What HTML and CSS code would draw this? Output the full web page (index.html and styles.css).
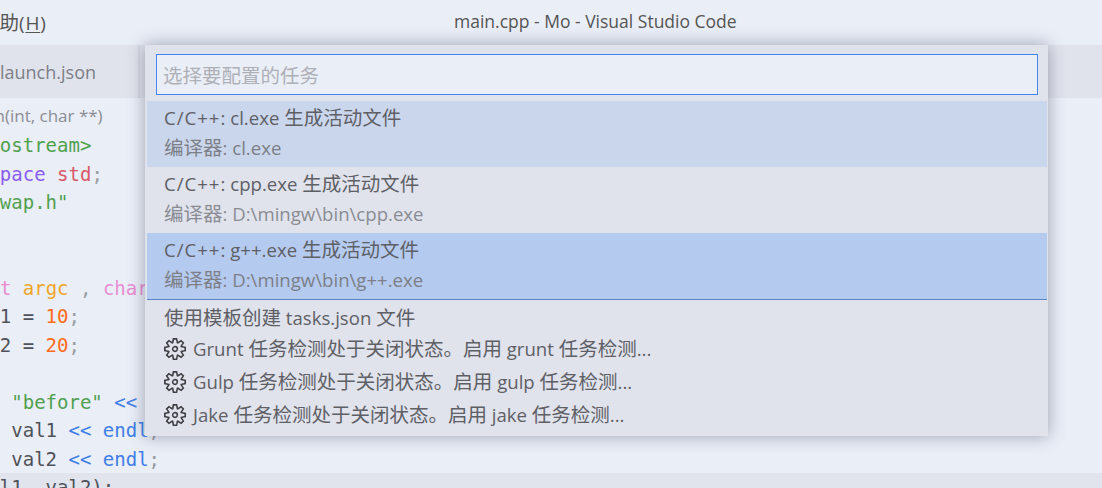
FILE: index.html
```html
<!DOCTYPE html>
<html lang="zh">
<head>
<meta charset="utf-8">
<title>main.cpp - Mo - Visual Studio Code</title>
<link rel="stylesheet" href="styles.css">
</head>
<body>
<div class="app">
  <header class="titlebar">
    <span class="menu"><span class="zh">帮助</span><span class="key">(<u>H</u>)</span></span>
    <span class="title">main.cpp - Mo - Visual Studio Code</span>
  </header>
  <div class="tabs">
    <div class="tab"><span>launch.json</span></div>
  </div>
  <div class="crumbs">main(int, char **)</div>
  <pre class="code"><span class="kw">#include</span> <span class="str">&lt;iostream&gt;</span>
<span class="pur">using namespace</span> <span class="red">std</span><span class="pn">;</span>
<span class="kw">#include</span> <span class="str">"swap.h"</span>


<span class="pink">int</span> <span class="pink">main</span><span class="pn">(</span><span class="pink">int</span> <span class="org">argc</span> <span class="pn">,</span> <span class="pink">char</span> <span class="pn">**</span><span class="org">argv</span><span class="pn">)</span>
    <span class="pink">int</span> val1 = <span class="num">10</span><span class="pn">;</span>
    <span class="pink">int</span> val2 = <span class="num">20</span><span class="pn">;</span>

    cout <span class="blue">&lt;&lt;</span> <span class="str">"before"</span> <span class="blue">&lt;&lt;</span> endl<span class="pn">;</span>
    cout <span class="blue">&lt;&lt;</span> val1 <span class="blue">&lt;&lt;</span> <span class="blue">endl</span><span class="pn">;</span>
    cout <span class="blue">&lt;&lt;</span> val2 <span class="blue">&lt;&lt;</span> <span class="blue">endl</span><span class="pn">;</span>
<span class="current">    swap(val1, val2);</span></pre>
</div>

<div class="picker">
  <div class="inputbox"><span class="placeholder">选择要配置的任务</span></div>
  <ul class="list">
    <li class="item two sel-a"><div><span class="lang">C/C++</span>: cl.exe <span class="zh">生成活动文件</span></div><div class="sub"><span class="zh">编译器</span>: cl.exe</div></li>
    <li class="item two"><div><span class="lang">C/C++</span>: cpp.exe <span class="zh">生成活动文件</span></div><div class="sub"><span class="zh">编译器</span>: D:\mingw\bin\cpp.exe</div></li>
    <li class="item two sel-b"><div><span class="lang">C/C++</span>: g++.exe <span class="zh">生成活动文件</span></div><div class="sub"><span class="zh">编译器</span>: D:\mingw\bin\g++.exe</div></li>
    <li class="item one"><span><span class="zh">使用模板创建</span> tasks.json <span class="zh">文件</span></span></li>
    <li class="item one"><svg class="gear" viewBox="0 0 24 24"><use href="#gear"/></svg><span>Grunt <span class="zh">任务检测处于关闭状态。启用</span> grunt <span class="zh">任务检测</span>...</span></li>
    <li class="item one"><svg class="gear" viewBox="0 0 24 24"><use href="#gear"/></svg><span>Gulp <span class="zh">任务检测处于关闭状态。启用</span> gulp <span class="zh">任务检测</span>...</span></li>
    <li class="item one"><svg class="gear" viewBox="0 0 24 24"><use href="#gear"/></svg><span>Jake <span class="zh">任务检测处于关闭状态。启用</span> jake <span class="zh">任务检测</span>...</span></li>
  </ul>
</div>

<svg class="defs" width="0" height="0">
  <symbol id="gear" viewBox="0 0 24 24">
    <path fill="currentColor" fill-rule="evenodd" d="M19.85 8.75l4.15.83v4.84l-4.15.83 2.35 3.52-3.43 3.43-3.52-2.35-.83 4.15H9.58l-.83-4.15-3.52 2.35-3.43-3.43 2.35-3.52L0 14.42V9.58l4.15-.83L1.8 5.23 5.23 1.8l3.52 2.35L9.58 0h4.84l.83 4.15 3.52-2.35 3.43 3.43-2.35 3.52zm-1.57 5.07l4-.81v-2l-4-.81-.54-1.3 2.29-3.43-1.43-1.44-3.43 2.29-1.3-.54-.81-4h-2l-.81 4-1.3.54-3.43-2.29-1.44 1.43L6.38 8.9l-.54 1.3-4 .81v2l4 .81.54 1.3-2.29 3.43 1.43 1.44 3.43-2.29 1.3.54.81 4h2l.81-4 1.3-.54 3.43 2.29 1.44-1.43-2.29-3.43.54-1.3zm-8.186-4.672A3.43 3.43 0 0 1 12 8.57 3.44 3.44 0 0 1 15.43 12a3.43 3.43 0 1 1-5.336-2.852zm.956 4.274c.281.188.612.288.95.288A1.7 1.7 0 0 0 13.71 12a1.71 1.71 0 1 0-2.66 1.422z"/>
  </symbol>
</svg>
</body>
</html>
```
FILE: styles.css
```css
* { box-sizing: border-box; }
html, body { margin: 0; padding: 0; height: 100%; overflow: hidden; }
body {
  background: #eaeef7;
  font-family: "Open Sans", "Noto Sans CJK SC", sans-serif;
  color: #616161;
}
.zh { font-size: 19.5px; }
.lang { letter-spacing: 1px; }
.app { display: flex; flex-direction: column; height: 488px; overflow: hidden; position: relative; }
.titlebar {
  height: 45px;
  flex: none;
  background: #eaeef7;
  display: flex;
  align-items: center;
  position: relative;
  font-size: 17.5px;
  color: #555;
}
.menu { margin-left: -20px; margin-top: -2px; }
.key { font-size: 19px; letter-spacing: .8px; }
.menu u { text-underline-offset: 2px; }
.title { position: absolute; left: 454px; top: 9px; white-space: nowrap; }
.tabs { height: 53px; flex: none; background: #e0e3ec; display: flex; }
.tab {
  width: 140px;
  border-right: 2px solid #d6d9e2;
  display: flex;
  align-items: center;
  font-size: 18px;
  color: #7d7f87;
}
.crumbs {
  height: 34px;
  flex: none;
  display: flex;
  align-items: center;
  margin-left: -35px;
  font-size: 17px;
  color: #8b8d94;
  white-space: nowrap;
}
.code {
  margin: -1px 0 0 -126px;
  font-family: "DejaVu Sans Mono", monospace;
  font-size: 19px;
  line-height: 28.5px;
  color: #50525a;
  position: relative;
}
.current { display: inline-block; width: 1400px; background: #e1e4ed; }
.kw { color: #a626a4; }
.str { color: #50a14f; }
.pur { color: #8a5cf0; }
.red { color: #d9596a; }
.pink { color: #e98dd3; }
.org { color: #f0a52b; }
.num { color: #ff6a1a; }
.blue { color: #3f7ee8; }
.pn { color: #9a9ca3; }
.picker {
  position: absolute;
  left: 145px;
  top: 45px;
  width: 903px;
  height: 391px;
  background: #e0e3ec;
  box-shadow: 0 0 16px rgba(60, 66, 90, .45);
  padding: 9px 1px 0 2px;
}
.inputbox {
  margin: 0 9px 0 9px;
  height: 41px;
  background: #eaeef7;
  border: 1px solid #4284f5;
  display: flex;
  align-items: center;
  padding-left: 6px;
  font-size: 19.5px;
}
.placeholder { color: #aeb0b7; }
.list { list-style: none; margin: 6px 0 0; padding: 0; font-size: 18.6px; color: #5e6066; }
.item { padding-left: 17px; white-space: nowrap; }
.two { height: 66.2px; line-height: 30px; padding-top: 2px; }
.one { height: 33px; line-height: 33px; display: flex; align-items: center; }
.sub { color: #8a8c93; }
.sel-a { background: #cad6ec; }
.sel-b { background: #b5caef; border-bottom: 1px solid #5a85c9; }
.sel-a .sub, .sel-b .sub { color: #7c7f87; }
.item.one:nth-child(4) { margin-top: 2.5px; height: 30.4px; }
.gear { width: 22px; height: 22px; margin-right: 7px; color: #3f4044; flex: none; }
.defs { position: absolute; }
```
